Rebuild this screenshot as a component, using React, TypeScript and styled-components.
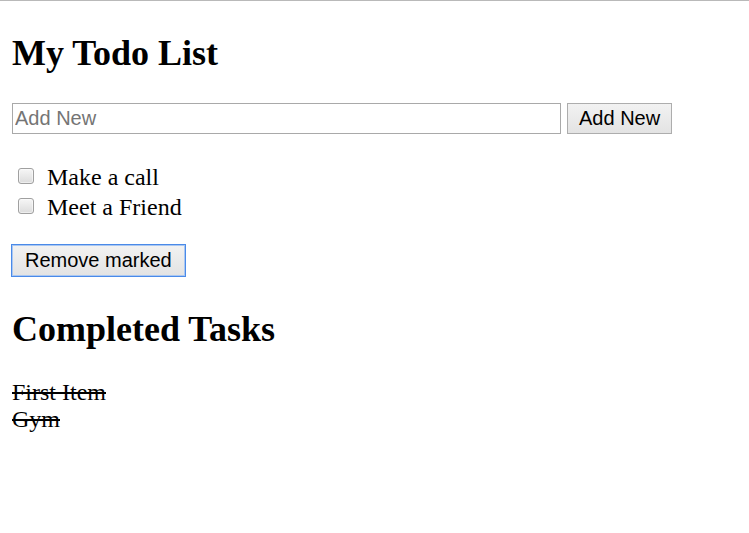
import React, { useState } from "react";
import styled, { createGlobalStyle } from "styled-components";

const Global = createGlobalStyle`
  html, body { margin: 0; padding: 0; background: #fff; }
  body { font-family: "Liberation Serif", "Times New Roman", serif; color: #000; }
`;

const Page = styled.div`
  border-top: 1px solid #b9b9b9;
  padding: 0 12px;
  display: flex;
  flex-direction: column;
  align-items: flex-start;
`;

const Heading = styled.h1<{ $top: number }>`
  margin: ${(p) => p.$top}px 0 0;
  font-size: 36px;
  line-height: 40px;
  font-weight: bold;
`;

const AddRow = styled.form`
  margin-top: 30px;
  display: flex;
  gap: 6px;
`;

const TextInput = styled.input`
  box-sizing: border-box;
  width: 549px;
  height: 31px;
  border: 1px solid #a9a9a9;
  padding: 0 2px;
  font-family: "Liberation Sans", Arial, sans-serif;
  font-size: 20px;
  color: #000;
  outline: none;
  &::placeholder { color: #757575; }
`;

const Button = styled.button<{ $focused?: boolean }>`
  box-sizing: border-box;
  height: ${(p) => (p.$focused ? 33 : 31)}px;
  padding: 0 ${(p) => (p.$focused ? 13 : 11)}px;
  font-family: "Liberation Sans", Arial, sans-serif;
  font-size: 20px;
  color: #000;
  background: linear-gradient(#f2f2f2, #e3e3e3);
  border: 1px solid ${(p) => (p.$focused ? "#4a8ae8" : "#adadad")};
  box-shadow: ${(p) => (p.$focused ? "inset 0 0 0 1px #a9c7f2" : "none")};
  border-radius: 0;
  outline: none;
`;

const TodoList = styled.ul`
  list-style: none;
  margin: 28px 0 0;
  padding: 0;
`;

const TodoItem = styled.li`
  display: flex;
  align-items: flex-start;
  height: 30px;
  line-height: 30px;
  font-size: 24px;
`;

const Check = styled.span`
  box-sizing: border-box;
  width: 16px;
  height: 16px;
  margin: 6px 13px 0 6px;
  border: 1px solid #a0a0a0;
  border-radius: 3px;
  background: linear-gradient(#f6f6f6, #dcdcdc);
  box-shadow: inset 0 0 0 1px #ffffff80;
  flex-shrink: 0;
`;

const RemoveWrap = styled.div`
  margin-top: 22px;
  margin-left: -1px;
`;

const DoneList = styled.ul`
  list-style: none;
  margin: 30px 0 0;
  padding: 0;
`;

const DoneItem = styled.li`
  font-size: 24px;
  line-height: 27px;
  text-decoration: line-through;
  text-decoration-thickness: 2px;
`;

export default function App() {
  const [text, setText] = useState("");
  const todos = ["Make a call", "Meet a Friend"];
  const done = ["First Item", "Gym"];
  return (
    <>
      <Global />
      <Page>
        <Heading $top={32}>My Todo List</Heading>
        <AddRow onSubmit={(e) => e.preventDefault()}>
          <TextInput
            placeholder="Add New"
            value={text}
            onChange={(e) => setText(e.target.value)}
          />
          <Button type="submit">Add New</Button>
        </AddRow>
        <TodoList>
          {todos.map((t) => (
            <TodoItem key={t}>
              <Check />
              {t}
            </TodoItem>
          ))}
        </TodoList>
        <RemoveWrap>
          <Button $focused>Remove marked</Button>
        </RemoveWrap>
        <Heading $top={32}>Completed Tasks</Heading>
        <DoneList>
          {done.map((t) => (
            <DoneItem key={t}>{t}</DoneItem>
          ))}
        </DoneList>
      </Page>
    </>
  );
}
